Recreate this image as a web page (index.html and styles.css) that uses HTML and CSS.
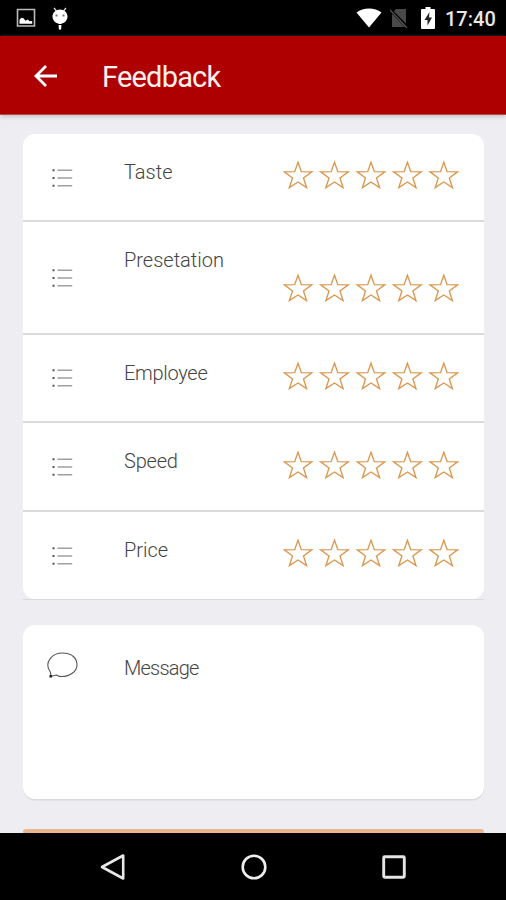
FILE: index.html
```
<!DOCTYPE html>
<html lang="en">
<head>
<meta charset="utf-8">
<title>Feedback</title>
<link rel="stylesheet" href="styles.css">
</head>
<body>
<svg class="defs" aria-hidden="true">
  <symbol id="list" viewBox="0 0 20 20">
    <path d="M5 2.3H19.7M5 10H19.7M5 17.7H19.7" stroke="#a0a0a0" stroke-width="1.4"/>
    <path d="M0 1.3h2v2H0zM0 9h2v2H0zM0 16.7h2v2H0z" fill="#555"/>
  </symbol>
  <symbol id="stars" viewBox="0 0 176 30">
    <g id="star"><path d="M15 2.2L18.3 11.7L28.8 11.9L20.5 17.9L23.6 27.6L15 22L6.4 27.6L9.5 17.9L1.2 11.9L11.7 11.7Z" fill="none" stroke="#d99850" stroke-width="1.35"/></g>
    <use href="#star" x="36.5"/><use href="#star" x="73"/><use href="#star" x="109.4"/><use href="#star" x="145.8"/>
  </symbol>
</svg>
<div class="screen">
  <div class="status">
    <svg class="picture" viewBox="0 0 20 20"><path d="M1.5 1.5h17v16.5h-17z" fill="none" stroke="#bbb" stroke-width="1.6"/><path d="M3.5 15.8v-4l2-2 2 .4 2 2.6 2.5-1.2 1.5 1.6 2.7-.2v2.8z" fill="#fff"/></svg>
    <svg class="debug" viewBox="0 0 18 24"><path d="M3 1l2.5 3M15 1l-2.5 3" stroke="#ddd" stroke-width="1.3"/><path d="M9 2.5c4 0 7.5 3 7.5 7 0 3.500-2.500 6.500-6 7l-.3 5.500L9 23l-1.200-1-.3-5.500C4 16 1.500 13 1.500 9.500c0-4 3.500-7 7.500-7z" fill="#fff"/><path d="M4.500 7.500h2v2h-2zM11.500 7.500h2v2h-2z" fill="#777"/><path d="M7 17.500h4" stroke="#000" stroke-width="1"/></svg>
    <svg class="wifi" viewBox="0 0 26 20"><path d="M.5 4.500C7.500-.8 18.500-.8 25.500 4.500L13 19.500z" fill="#fff"/></svg>
    <svg class="nosim" viewBox="0 0 18 20"><path d="M6 1h10v18H2V5z" fill="#494949"/><path d="M0 1.500L17.500 19.500" stroke="#000" stroke-width="3"/><path d="M0 2L17 20" stroke="#5c5c5c" stroke-width="1.200"/></svg>
    <svg class="battery" viewBox="0 0 14 22"><path d="M4.500 0h5v2H13q1 0 1 1v18q0 1-1 1H1q-1 0-1-1V3q0-1 1-1h3.500z" fill="#fff"/><path d="M8.500 5L3.500 13h3v5.500L11 10.500H8z" fill="#222"/></svg>
    <span class="clock">17:40</span>
  </div>
  <header class="appbar">
    <svg class="back" viewBox="0 0 24 24"><path d="M23 12H2M12 2L2 12l10 10" fill="none" stroke="#fff" stroke-width="2.800"/></svg>
    <h1 class="title">Feedback</h1>
  </header>
  <main class="content">
    <section class="ratings">
      <div class="card">
        <div class="row"><svg class="list"><use href="#list"/></svg><span class="label">Taste</span><svg class="stars"><use href="#stars"/></svg></div>
        <div class="row tall"><svg class="list"><use href="#list"/></svg><span class="label">Presetation</span><svg class="stars"><use href="#stars"/></svg></div>
        <div class="row"><svg class="list"><use href="#list"/></svg><span class="label employee">Employee</span><svg class="stars"><use href="#stars"/></svg></div>
        <div class="row"><svg class="list"><use href="#list"/></svg><span class="label speed">Speed</span><svg class="stars"><use href="#stars"/></svg></div>
        <div class="row"><svg class="list"><use href="#list"/></svg><span class="label">Price</span><svg class="stars"><use href="#stars"/></svg></div>
      </div>
    </section>
    <section class="message">
      <svg class="bubble" viewBox="0 0 32 28"><path d="M4.500 25.500C5.200 23.500 5 22 3.500 19.500-1.500 11 6 2 16.500 2S31 8 31 14 24.500 25.500 15.500 25.500c-2.500 0-3.500-.8-5-1.500-2 0-3.500 1.200-6 1.500z" fill="none" stroke="#555" stroke-width="1.100"/><path d="M3.500 24h2.500v2.500H3.500z" fill="#222"/></svg>
      <span class="label msg">Message</span>
    </section>
    <div class="submit"></div>
  </main>
  <nav class="navbar">
    <svg viewBox="0 0 28 28"><path d="M24.200 2.500v23L3 14z" fill="none" stroke="#e8e8e8" stroke-width="2.600" stroke-linejoin="round"/></svg>
    <svg viewBox="0 0 28 28"><circle cx="14" cy="14" r="11.300" fill="none" stroke="#eee" stroke-width="2.600"/></svg>
    <svg viewBox="0 0 28 28"><rect x="3.700" y="3.700" width="20.600" height="20.600" rx="1" fill="none" stroke="#e4e4e4" stroke-width="2.900"/></svg>
  </nav>
</div>
</body>
</html>
```
FILE: styles.css
```
* { box-sizing: border-box; }
body { margin: 0; font-family: Roboto, sans-serif; background: #eeeef2; }
svg { display: block; flex: none; }
.defs { width: 0; height: 0; position: absolute; }
.screen { width: 506px; height: 900px; display: flex; flex-direction: column; overflow: hidden; }
.status { height: 36px; flex: none; background: #000; display: flex; align-items: flex-start; padding: 0 11px 0 16px; }
.picture { width: 20px; height: 20px; margin-top: 8px; }
.debug { width: 18px; height: 24px; margin: 7px 0 0 15px; }
.wifi { width: 26px; height: 20px; margin: 7.500px 0 0 auto; }
.nosim { width: 18px; height: 20px; margin: 8px 0 0 8px; }
.battery { width: 14px; height: 22px; margin: 6.500px 0 0 13px; }
.clock { width: 50px; margin-left: 10px; color: #e8e8e8; font-size: 20px; font-weight: 500; line-height: 38px; white-space: nowrap; }
.appbar { height: 79px; flex: none; background: #ae0000; border-bottom: 1px solid #b54a48; box-shadow: 0 2px 4px #c4c4cc; display: flex; align-items: center; padding-left: 34px; z-index: 1; }
.back { width: 24px; height: 24px; margin-top: 1px; }
.title { margin: 3px 0 0 44px; color: #fff0ee; font-size: 29px; font-weight: 400; line-height: 36px; letter-spacing: -.8px; }
.content { flex: 1; min-height: 0; overflow: hidden; padding: 19px 22px 0 23px; }
.ratings { height: 466px; border-bottom: 1px solid #d9d9de; }
.card { height: 465px; background: #fff; border-radius: 12px; display: flex; flex-direction: column; overflow: hidden; }
.row { flex: 0 0 88.500px; display: flex; align-items: center; padding: 0 25px 0 29px; border-bottom: 2px solid #dadadc; }
.row.tall { flex-basis: 112.500px; }
.row:first-child { flex-basis: 88px; }
.row:last-child { flex-basis: 87.500px; border-bottom: 0; }
.list { width: 21px; height: 20px; margin-top: 1px; }
.label { color: #444; font-size: 20px; font-weight: 300; line-height: 24px; white-space: nowrap; }
.row .label { align-self: flex-start; margin: 26px 0 0 51px; }
.label.employee { letter-spacing: -.3px; }
.label.speed { letter-spacing: -.2px; }
.stars { width: 176px; height: 30px; margin: 0 0 30px auto; align-self: flex-end; }
.row:last-child .stars { margin-bottom: 31px; }
.message { height: 174px; margin-top: 25px; background: #fff; border-radius: 12px; box-shadow: 0 1.500px 0 #dadade; display: flex; align-items: flex-start; padding-left: 23px; }
.bubble { width: 32px; height: 28px; margin-top: 26px; }
.message .label { margin: 31px 0 0 46px; letter-spacing: -.8px; }
.submit { height: 60px; margin-top: 30px; background: #e9b78f; border-radius: 3px; }
.navbar { height: 67px; flex: none; background: #000; display: flex; justify-content: center; gap: 112.500px; padding: 20px 0 0 1px; z-index: 1; }
.navbar svg { width: 28px; height: 28px; }
```
